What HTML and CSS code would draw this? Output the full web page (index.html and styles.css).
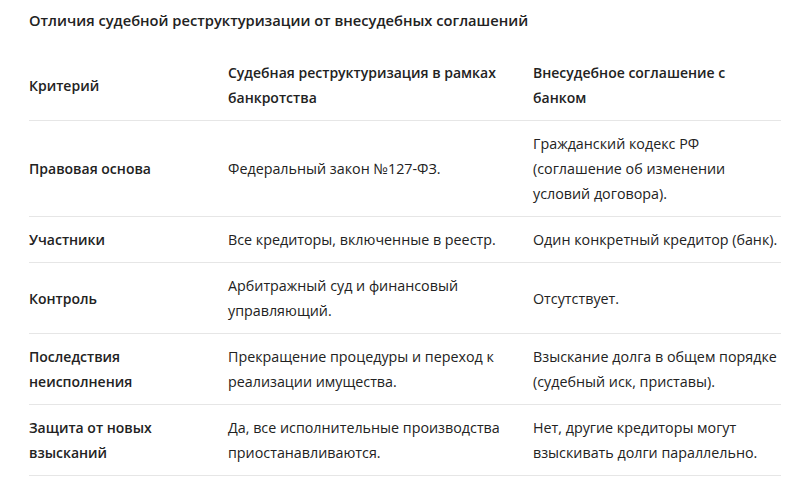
FILE: index.html
```html
<!DOCTYPE html>
<html lang="ru">
<head>
<meta charset="utf-8">
<link rel="stylesheet" href="styles.css">
</head>
<body>
<div class="wrap">
  <h3 class="title">Отличия судебной реструктуризации от внесудебных соглашений</h3>
  <table class="cmp">
    <colgroup>
      <col class="c1"><col class="c2"><col class="c3">
    </colgroup>
    <thead>
      <tr>
        <th>Критерий</th>
        <th>Судебная реструктуризация в рамках банкротства</th>
        <th>Внесудебное соглашение с банком</th>
      </tr>
    </thead>
    <tbody>
      <tr>
        <td class="k">Правовая основа</td>
        <td>Федеральный закон №127-ФЗ.</td>
        <td>Гражданский кодекс РФ (соглашение об изменении условий договора).</td>
      </tr>
      <tr>
        <td class="k">Участники</td>
        <td>Все кредиторы, включенные в реестр.</td>
        <td>Один конкретный кредитор (банк).</td>
      </tr>
      <tr>
        <td class="k">Контроль</td>
        <td>Арбитражный суд и финансовый управляющий.</td>
        <td>Отсутствует.</td>
      </tr>
      <tr>
        <td class="k">Последствия неисполнения</td>
        <td>Прекращение процедуры и переход к реализации имущества.</td>
        <td>Взыскание долга в общем порядке (судебный иск, приставы).</td>
      </tr>
      <tr>
        <td class="k">Защита от новых взысканий</td>
        <td>Да, все исполнительные производства приостанавливаются.</td>
        <td>Нет, другие кредиторы могут взыскивать долги параллельно.</td>
      </tr>
    </tbody>
  </table>
</div>
</body>
</html>
```

FILE: styles.css
```css
html, body {
  margin: 0;
  padding: 0;
  background: #ffffff;
}
body {
  font-family: "Open Sans", "Noto Sans", sans-serif;
  font-size: 14.3px;
  color: #222222;
}
.wrap {
  padding: 8px 12px 0 29px;
}
.title {
  margin: 0 0 18px 0;
  font-size: 14.7px;
  line-height: 24px;
  font-weight: 600;
}
.cmp {
  width: 752px;
  border-collapse: collapse;
  table-layout: fixed;
}
.c1 { width: 199px; }
.c2 { width: 305px; }
.c3 { width: 248px; }
.cmp th, .cmp td {
  text-align: left;
  vertical-align: middle;
  padding: 10px 16px 10px 0;
  line-height: 25px;
  border-bottom: 1px solid #e6e6e6;
}
.cmp th {
  font-size: 14px;
  font-weight: 600;
}
.cmp th:last-child, .cmp td:last-child {
  padding-right: 0;
}
.cmp td.k {
  font-size: 14px;
  font-weight: 600;
}
```
